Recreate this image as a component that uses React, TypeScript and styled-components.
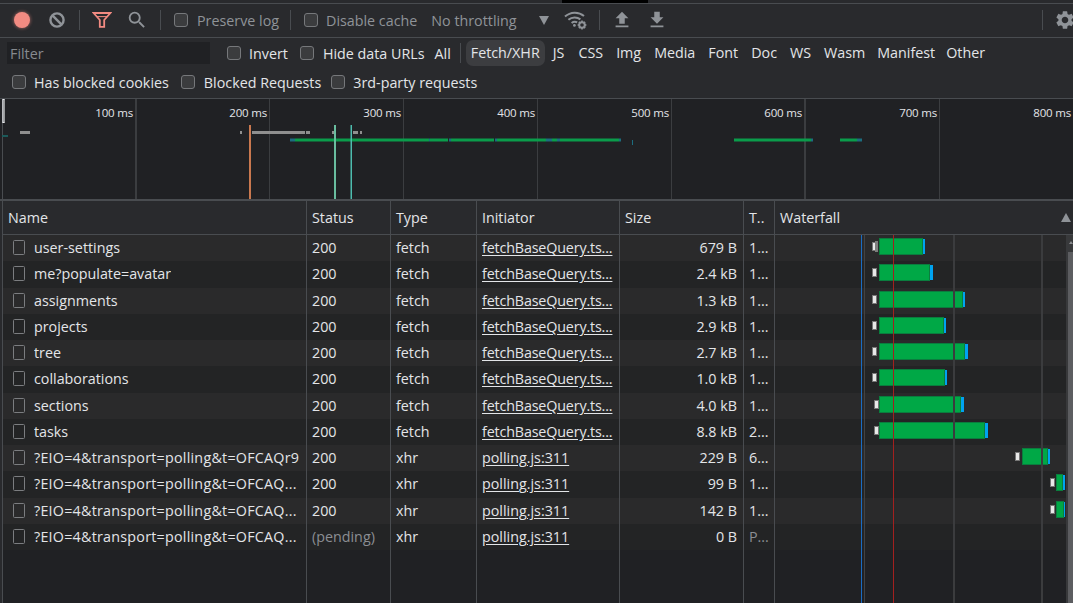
import React from 'react'
import styled, { createGlobalStyle } from 'styled-components'
import { MdFileUpload, MdFileDownload, MdSettings, MdSearch } from 'react-icons/md'

const GlobalStyle = createGlobalStyle`
	html, body {
		margin: 0;
		padding: 0;
		height: 100%;
		overflow: hidden;
		background: #202124;
	}
	#root {
		height: 100%;
	}
`

const Page = styled.div`
	width: 1073px;
	height: 603px;
	display: flex;
	flex-direction: column;
	overflow: hidden;
	background: #292a2d;
	color: #e3e5e8;
	font-family: 'Open Sans', 'Noto Sans', sans-serif;
	font-size: 14.3px;
`

const TopEdge = styled.div`
	height: 4px;
	flex: none;
	background: #292a2d;
	border-bottom: 1px solid #494c50;
	box-sizing: border-box;
	position: relative;
`

const BlackTab = styled.div`
	position: absolute;
	left: 562px;
	top: 0;
	width: 86px;
	height: 3px;
	background: #000;
`

const Toolbar = styled.div`
	height: 34px;
	flex: none;
	display: flex;
	align-items: center;
	box-sizing: border-box;
	padding-bottom: 1px;
	border-bottom: 1px solid #494c50;
	color: #8f9398;
	overflow: hidden;
`

const IconSlot = styled.span<{ $w: number; $ml: number }>`
	width: ${p => p.$w}px;
	margin-left: ${p => p.$ml}px;
	flex: none;
	display: flex;
	align-items: center;
	justify-content: center;
	color: #8f9398;
`

const Divider = styled.span<{ $ml: number }>`
	width: 1px;
	height: 20px;
	flex: none;
	background: #494c50;
	margin-left: ${p => p.$ml}px;
`

const Box = styled.span`
	width: 14px;
	height: 14px;
	flex: none;
	box-sizing: border-box;
	border: 1px solid #76787b;
	border-radius: 3px;
	background: #3b3c3e;
`

const Check = styled.label<{ $ml: number; $gap?: number }>`
	display: flex;
	align-items: center;
	flex: none;
	margin-left: ${p => p.$ml}px;
	gap: ${p => p.$gap ?? 8}px;
	white-space: nowrap;
`

const Plain = styled.span<{ $ml: number }>`
	margin-left: ${p => p.$ml}px;
	flex: none;
	white-space: nowrap;
`

const FilterRow = styled.div`
	height: 32px;
	flex: none;
	display: flex;
	align-items: center;
	box-sizing: border-box;
	padding: 0 0 2px 7px;
`

const FilterInput = styled.div`
	width: 203px;
	height: 22px;
	flex: none;
	box-sizing: border-box;
	margin-bottom: 1px;
	padding-left: 3px;
	line-height: 23px;
	background: #202124;
	color: #868a8f;
`

const TypeButton = styled.span<{ $active?: boolean; $ml: number }>`
	flex: none;
	margin-left: ${p => p.$ml}px;
	padding: 0 5px;
	height: 26px;
	line-height: 26px;
	border-radius: 7px;
	background: ${p => (p.$active ? '#3c3d40' : 'transparent')};
`

const BlockedRow = styled.div`
	height: 28px;
	flex: none;
	display: flex;
	align-items: center;
	box-sizing: border-box;
	padding-bottom: 4px;
`

const Overview = styled.div`
	height: 103px;
	flex: none;
	box-sizing: border-box;
	position: relative;
	display: flex;
	padding-left: 2px;
	background: #202124;
	border-top: 1px solid #494c50;
	border-bottom: 2px solid #494c50;
`

const Tick = styled.div<{ $w: number; $thick?: boolean }>`
	width: ${p => p.$w}px;
	flex: none;
	box-sizing: border-box;
	border-right: ${p => (p.$thick ? 2 : 1)}px solid #3b3d40;
	padding: 5px 2px 0 0;
	text-align: right;
	font-size: 11.5px;
	letter-spacing: -0.2px;
	line-height: 17px;
	white-space: nowrap;
`

const Lane = styled.svg`
	position: absolute;
	left: 0;
	top: 0;
	width: 1073px;
	height: 100px;
`

const Table = styled.div`
	flex: 1;
	min-height: 0;
	position: relative;
	display: flex;
	flex-direction: column;
	margin-left: 2px;
	background: #202124;
	border-left: 1px solid #494c50;
`

const columnWidths = [304, 84, 86, 143, 124, 31]
const columns = `${columnWidths.map(w => `${w}px`).join(' ')} 1fr`

const HeadRow = styled.div`
	height: 34px;
	flex: none;
	display: grid;
	grid-template-columns: ${columns};
	background: #292a2d;
	border-bottom: 1px solid #494c50;
	box-sizing: border-box;
`

const HeadCell = styled.div`
	display: flex;
	align-items: center;
	justify-content: space-between;
	padding-left: 5px;
	border-right: 1px solid #494c50;
	overflow: hidden;
	white-space: nowrap;
	&:last-child {
		border-right: 0;
		padding-right: 2px;
	}
`

const SortArrow = styled.span`
	width: 0;
	height: 0;
	border-left: 5.5px solid transparent;
	border-right: 5.5px solid transparent;
	border-bottom: 9px solid #8f9398;
`

const Row = styled.div<{ $odd: boolean }>`
	height: 26.25px;
	flex: none;
	display: grid;
	grid-template-columns: ${columns};
	background: ${p => (p.$odd ? '#2a2a2b' : '#232425')};
`

const Cell = styled.div<{ $right?: boolean; $dim?: boolean }>`
	display: flex;
	align-items: center;
	justify-content: ${p => (p.$right ? 'flex-end' : 'flex-start')};
	box-sizing: border-box;
	padding: 0 ${p => (p.$right ? 6 : 5)}px 1px 5px;
	min-width: 0;
	overflow: hidden;
	white-space: nowrap;
	color: ${p => (p.$dim ? '#8b8e93' : 'inherit')};
	border-right: 1px solid #494c50;
`

const NameCell = styled(Cell)`
	padding-left: 10px;
	gap: 9px;
`

const FileIcon = styled.span`
	width: 12px;
	height: 15px;
	flex: none;
	box-sizing: border-box;
	border: 1px solid #7b7d80;
	border-radius: 1.5px;
`

const LinkText = styled.span<{ $tight: boolean }>`
	text-decoration: underline;
	text-underline-offset: 2px;
	letter-spacing: ${p => (p.$tight ? -0.15 : 0)}px;
`

const Clip = styled.span<{ $wide: boolean }>`
	overflow: hidden;
	text-overflow: ellipsis;
	letter-spacing: ${p => (p.$wide ? 0.24 : 0)}px;
`

const Waterfall = styled.div`
	position: relative;
`

const Stall = styled.span`
	position: absolute;
	top: 7px;
	height: 9px;
	width: 5px;
	box-sizing: border-box;
	background: #e8e8e8;
	border: 1px solid #777;
`

const Queue = styled.span`
	position: absolute;
	top: 6px;
	height: 11px;
	width: 3px;
	background: #7d7d7d;
`

const Wait = styled.span`
	position: absolute;
	top: 3px;
	height: 17px;
	box-sizing: border-box;
	background: #00a846;
	border: 1px solid #0a7d3e;
`

const Download = styled.span`
	position: absolute;
	top: 4px;
	height: 15px;
	background: #00a3f0;
`

const Marker = styled.span<{ $x: number; $color: string; $wide?: boolean }>`
	position: absolute;
	top: 34px;
	bottom: 0;
	left: ${p => p.$x - 3}px;
	width: ${p => (p.$wide ? 2 : 1)}px;
	background: ${p => p.$color};
`

const Scrollbar = styled.div`
	position: absolute;
	top: 34px;
	right: 0;
	bottom: 0;
	width: 7px;
	background: #38393b;
`

const ScrollThumb = styled.div`
	position: absolute;
	top: 17px;
	left: 2px;
	right: 0;
	bottom: 0;
	background: #5c5d60;
`

const ScrollArrow = styled.span`
	position: absolute;
	top: 6px;
	left: 3px;
	width: 0;
	height: 0;
	border-left: 2.5px solid transparent;
	border-right: 2.5px solid transparent;
	border-bottom: 3px solid #8a8c8f;
`

const Filler = styled.div`
	flex: 1;
	display: flex;
`

const FillerCol = styled.div<{ $w: number }>`
	width: ${p => p.$w}px;
	flex: none;
	box-sizing: border-box;
	border-right: 1px solid #494c50;
`

const RecordDot = styled.span`
	width: 16px;
	height: 16px;
	border-radius: 50%;
	background: #f28b82;
	box-shadow: 0 0 3px 1px rgba(242, 139, 130, 0.4);
`

const SelectCaret = styled.span`
	width: 0;
	height: 0;
	border-left: 5.5px solid transparent;
	border-right: 5.5px solid transparent;
	border-top: 9px solid #8f9398;
`

type Req = {
	name: string
	status: string
	type: string
	initiator: string
	size: string
	time: string
	// stalled start, waiting start, download start, end (page x)
	bar?: [number, number, number, number]
	queued?: boolean
}

const fb = 'fetchBaseQuery.ts...'
const poll = 'polling.js:311'
const long = '?EIO=4&transport=polling&t=OFCAQ...'
const waterfallLeft = 775

const requests: Req[] = [
	{ name: 'user-settings', status: '200', type: 'fetch', initiator: fb, size: '679 B', time: '1...', bar: [872, 879, 923, 925], queued: true },
	{ name: 'me?populate=avatar', status: '200', type: 'fetch', initiator: fb, size: '2.4 kB', time: '1...', bar: [872, 879, 930, 933] },
	{ name: 'assignments', status: '200', type: 'fetch', initiator: fb, size: '1.3 kB', time: '1...', bar: [872, 879, 963, 965] },
	{ name: 'projects', status: '200', type: 'fetch', initiator: fb, size: '2.9 kB', time: '1...', bar: [872, 879, 944, 946] },
	{ name: 'tree', status: '200', type: 'fetch', initiator: fb, size: '2.7 kB', time: '1...', bar: [872, 879, 965, 968] },
	{ name: 'collaborations', status: '200', type: 'fetch', initiator: fb, size: '1.0 kB', time: '1...', bar: [872, 879, 945, 947] },
	{ name: 'sections', status: '200', type: 'fetch', initiator: fb, size: '4.0 kB', time: '1...', bar: [874, 879, 961, 964] },
	{ name: 'tasks', status: '200', type: 'fetch', initiator: fb, size: '8.8 kB', time: '2...', bar: [874, 879, 985, 988] },
	{ name: '?EIO=4&transport=polling&t=OFCAQr9', status: '200', type: 'xhr', initiator: poll, size: '229 B', time: '6...', bar: [1015, 1022, 1048, 1050] },
	{ name: long, status: '200', type: 'xhr', initiator: poll, size: '99 B', time: '1...', bar: [1050, 1056, 1063, 1065] },
	{ name: long, status: '200', type: 'xhr', initiator: poll, size: '142 B', time: '1...', bar: [1050, 1056, 1064, 1065] },
	{ name: long, status: '(pending)', type: 'xhr', initiator: poll, size: '0 B', time: 'P...' },
]

const typeButtons: [string, number, boolean?][] = [
	['Fetch/XHR', 5, true],
	['JS', 3],
	['CSS', 4],
	['Img', 3],
	['Media', 3],
	['Font', 3],
	['Doc', 3],
	['WS', 3],
	['Wasm', 3],
	['Manifest', 2],
	['Other', 1],
]

const ticks: [string, number, boolean?][] = [
	['100 ms', 135, true],
	['200 ms', 133],
	['300 ms', 134],
	['400 ms', 134],
	['500 ms', 134],
	['600 ms', 134, true],
	['700 ms', 134],
	['800 ms', 134],
]

const grayBars = [
	[20, 10],
	[240, 2],
	[252, 53],
	[306, 4],
	[332, 4],
	[353, 5],
	[360, 2],
]

const greenBars = [
	[295, 134],
	[430, 18],
	[451, 43],
	[497, 49],
	[552, 5],
	[560, 59],
	[734, 77],
	[840, 17],
]

const blueBars = [
	[290, 5],
	[429, 1],
	[449, 2],
	[495, 2],
	[546, 6],
	[557, 3],
	[619, 2],
	[811, 2],
	[857, 5],
]

const ClearIcon = () => (
	<svg width="18" height="18" viewBox="0 0 18 18" fill="none" stroke="#8f9398" strokeWidth="2.4">
		<circle cx="9" cy="9" r="6.6" />
		<path d="M4.4 4.4l9.2 9.2" />
	</svg>
)

const FilterIcon = () => (
	<svg width="20" height="18" viewBox="0 0 20 18" fill="none" stroke="#f28b82" strokeWidth="1.8">
		<path d="M1.6 2h16.8l-6.2 7v6.8H7.8V9z" />
		<path d="M5 5.6h10" strokeWidth="1" />
	</svg>
)

const WifiGear = () => (
	<svg width="24" height="20" viewBox="0 0 24 20" fill="none" stroke="#8f9398">
		<path d="M1 6.6C6.4 1.6 14.6 1.4 20 6" strokeWidth="2" />
		<path d="M4.4 9.8c3.6-3 8.6-3 12-.4" strokeWidth="2" />
		<path d="M7.6 13c1.8-1.4 4-1.4 5.6-.6" strokeWidth="2" />
		<circle cx="10.4" cy="15.4" r="1.4" fill="#8f9398" stroke="none" />
		<circle cx="18" cy="15" r="2.8" strokeWidth="2" />
		<path d="M18 10.6v1.4M18 18v1.4M13.6 15H15M21 15h1.4M14.9 11.9l1 1M20.1 17.1l1 1M14.9 18.1l1-1M20.1 12.9l1-1" strokeWidth="1.6" />
	</svg>
)

export default function App() {
	return (
		<Page>
			<GlobalStyle />
			<TopEdge>
				<BlackTab />
			</TopEdge>
			<Toolbar>
				<IconSlot $w={21} $ml={11}>
					<RecordDot />
				</IconSlot>
				<IconSlot $w={30} $ml={10}>
					<ClearIcon />
				</IconSlot>
				<Divider $ml={7} />
				<IconSlot $w={24} $ml={10}>
					<FilterIcon />
				</IconSlot>
				<IconSlot $w={24} $ml={11}>
					<MdSearch size={22} />
				</IconSlot>
				<Divider $ml={11} />
				<Check $ml={13} $gap={9}>
					<Box />
					Preserve log
				</Check>
				<Divider $ml={11} />
				<Check $ml={13}>
					<Box />
					Disable cache
				</Check>
				<Plain $ml={14}>No throttling</Plain>
				<IconSlot $w={12} $ml={21}>
					<SelectCaret />
				</IconSlot>
				<IconSlot $w={24} $ml={14}>
					<WifiGear />
				</IconSlot>
				<Divider $ml={11} />
				<IconSlot $w={24} $ml={10}>
					<MdFileUpload size={22} />
				</IconSlot>
				<IconSlot $w={24} $ml={11}>
					<MdFileDownload size={22} />
				</IconSlot>
				<Divider $ml={373} />
				<IconSlot $w={24} $ml={10}>
					<MdSettings size={22} />
				</IconSlot>
			</Toolbar>
			<FilterRow>
				<FilterInput>Filter</FilterInput>
				<Check $ml={17}>
					<Box />
					Invert
				</Check>
				<Check $ml={12} $gap={9}>
					<Box />
					Hide data URLs
				</Check>
				<Plain $ml={10}>All</Plain>
				<Divider $ml={9} />
				{typeButtons.map(([label, ml, active]) => (
					<TypeButton key={label} $ml={ml} $active={active}>
						{label}
					</TypeButton>
				))}
			</FilterRow>
			<BlockedRow>
				<Check $ml={12}>
					<Box />
					Has blocked cookies
				</Check>
				<Check $ml={12} $gap={9}>
					<Box />
					Blocked Requests
				</Check>
				<Check $ml={10}>
					<Box />
					3rd-party requests
				</Check>
			</BlockedRow>
			<Overview>
				{ticks.map(([label, w, thick]) => (
					<Tick key={label} $w={w} $thick={thick}>
						{label}
					</Tick>
				))}
				<Lane viewBox="0 0 1073 100">
					<rect x={2} y={0} width={1} height={100} fill="#494c50" />
					<rect x={2.3} y={0} width={2.4} height={24} fill="#e8eaed" />
					<rect x={3.4} y={1} width={1} height={22} fill="#77797c" />
					<rect x={2} y={36} width={6} height={2} fill="#1c5a5a" />
					{grayBars.map(([x, w]) => (
						<rect key={x} x={x} y={32} width={w} height={3} fill="#8f8f8f" />
					))}
					{greenBars.map(([x, w]) => (
						<rect key={x} x={x} y={39.5} width={w} height={3} fill="#0a9c4b" />
					))}
					{blueBars.map(([x, w]) => (
						<rect key={x} x={x} y={39.5} width={w} height={3} fill="#1c6d7f" />
					))}
					<rect x={632} y={41} width={1} height={5} fill="#1c6d7f" />
					<rect x={249} y={26} width={2} height={74} fill="#c9784f" />
					<rect x={334} y={26} width={2} height={74} fill="#69bd9f" />
					<rect x={350.5} y={26} width={1.5} height={74} fill="#4dbcae" />
				</Lane>
			</Overview>
			<Table>
				<HeadRow>
					<HeadCell>Name</HeadCell>
					<HeadCell>Status</HeadCell>
					<HeadCell>Type</HeadCell>
					<HeadCell>Initiator</HeadCell>
					<HeadCell>Size</HeadCell>
					<HeadCell>T..</HeadCell>
					<HeadCell>
						Waterfall
						<SortArrow />
					</HeadCell>
				</HeadRow>
				{requests.map((r, i) => (
					<Row key={i} $odd={i % 2 === 0}>
						<NameCell>
							<FileIcon />
							<Clip $wide={r.name.startsWith('?EIO')}>{r.name}</Clip>
						</NameCell>
						<Cell $dim={r.status === '(pending)'}>{r.status}</Cell>
						<Cell>{r.type}</Cell>
						<Cell>
							<LinkText $tight={r.initiator === fb}>{r.initiator}</LinkText>
						</Cell>
						<Cell $right>{r.size}</Cell>
						<Cell $dim={r.time === 'P...'}>{r.time}</Cell>
						<Waterfall>
							{r.bar && (
								<>
									<Stall style={{ left: r.bar[0] - waterfallLeft }} />
									{r.queued && <Queue style={{ left: r.bar[0] + 3 - waterfallLeft }} />}
									<Wait
										style={{
											left: r.bar[1] - waterfallLeft,
											width: r.bar[2] - r.bar[1],
										}}
									/>
									<Download
										style={{
											left: r.bar[2] - waterfallLeft,
											width: r.bar[3] - r.bar[2],
										}}
									/>
								</>
							)}
						</Waterfall>
					</Row>
				))}
				<Filler>
					{columnWidths.map((w, i) => (
						<FillerCol key={i} $w={w} />
					))}
				</Filler>
				<Marker $x={861} $color="#1a6cc4" />
				<Marker $x={864} $color="#424345" />
				<Marker $x={893} $color="#a3201f" />
				<Marker $x={953} $color="#3b3c3e" $wide />
				<Marker $x={1041} $color="#3b3c3e" $wide />
				<Scrollbar>
					<ScrollArrow />
					<ScrollThumb />
				</Scrollbar>
			</Table>
		</Page>
	)
}
